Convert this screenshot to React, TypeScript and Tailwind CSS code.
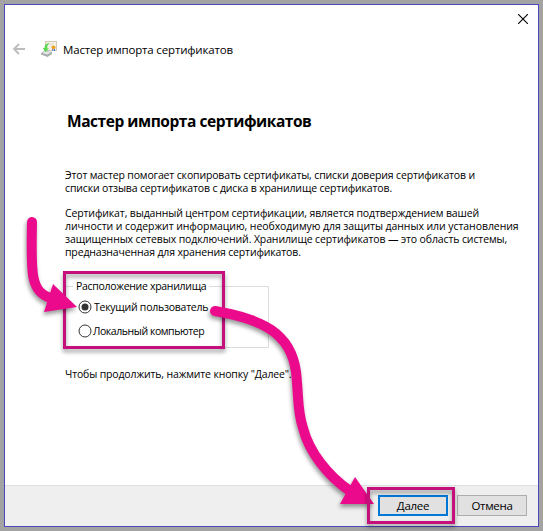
import React from "react";

function CertificateIcon() {
  return (
    <svg className="h-4 w-4 shrink-0" viewBox="0 0 16 16">
      <rect x="4.5" y="0.5" width="11" height="9" fill="#f6f1e8" stroke="#d3c9b8" />
      <path d="M8 3h5M9 5h2" stroke="#e2dccf" strokeWidth="1" />
      <path d="M11.200 7v3h1V7zM13 7v3h1V7z" fill="#3f78d0" />
      <circle cx="12.500" cy="6.300" r="1.900" fill="#eda01c" />
      <path d="M0 12L3.500 9.500l7.500 1.500v2l-4.500 3L0 13.500z" fill="#a9adaf" />
      <path d="M1 11.800L4 10l6 1.200-3.800 2.300z" fill="#e5e8e8" />
      <path d="M7.800 2C4.800 2.800 3.600 4.500 3.400 7H1.800L4.500 11.200 8 7.500H6.200C6.200 5.200 6.700 3.800 8.200 2.800z" fill="#5fd653" />
    </svg>
  );
}

function Radio({ label, checked, className }: { label: string; checked: boolean; className: string }) {
  return (
    <label className={`flex h-[14px] items-center ${className}`}>
      <svg className="h-[14px] w-[14px] shrink-0" viewBox="0 0 14 14">
        <circle cx="7" cy="7" r="6" fill="white" stroke="#333" strokeWidth="1" />
        {checked && <circle cx="7" cy="7" r="3.500" fill="#333" />}
      </svg>
      <span className="whitespace-nowrap">{label}</span>
    </label>
  );
}

function Annotations() {
  return (
    <svg className="pointer-events-none absolute left-0 top-0 h-[531px] w-[543px] drop-shadow-[-1px_3px_2px_rgba(0,0,0,0.4)]" viewBox="0 0 543 531">
      <g fill="none" stroke="#ec0a8c" strokeWidth="10" strokeLinecap="round">
        <path d="M32 222C31 272 30 292 51 298" />
        <path d="M215 311C262 319 291 333 296 372C299 398 297 410 303 428C309 452 328 476 350 491" />
      </g>
      <path d="M53 284L77 307L44 312Z" fill="#ec0a8c" />
      <path d="M355 477L374 504L340 504Z" fill="#ec0a8c" />
    </svg>
  );
}

export default function App() {
  return (
    <div className="relative h-[531px] w-[543px] overflow-hidden bg-[#a3a3a3] pl-1 pt-1 font-['Open_Sans','Noto_Sans',sans-serif] text-black">
      <div className="flex h-[523px] w-[535px] flex-col border border-[#4a48b8] bg-white">
        <div className="flex h-7 justify-end pr-[10px] pt-[9px]">
          <svg className="h-[10px] w-[10px]" viewBox="0 0 10 10" stroke="#000" strokeWidth="1.100">
            <path d="M0 0L10 10M10 0L0 10" />
          </svg>
        </div>
        <header className="flex h-[32px] items-center pl-2">
          <svg className="h-3 w-3" viewBox="0 0 12 12" fill="none" stroke="#bcbcbc" strokeWidth="1.800">
            <path d="M12 6H1M6 1L1 6l5 5" />
          </svg>
          <div className="ml-4"><CertificateIcon /></div>
          <span className="ml-[6px] whitespace-nowrap pt-[2px] text-[11.5px] tracking-[-0.16px]">Мастер импорта сертификатов</span>
        </header>
        <main className="flex h-[420px] flex-col pl-[60px] text-[10.5px] leading-[13px] tracking-[-0.15px]">
          <h1 className="mt-[44px] whitespace-nowrap pl-[2px] text-[15.5px] font-bold leading-6 tracking-[-0.45px]">Мастер импорта сертификатов</h1>
          <p className="mt-[36px] whitespace-nowrap">
            Этот мастер помогает скопировать сертификаты, списки доверия сертификатов и<br />
            списки отзыва сертификатов с диска в хранилище сертификатов.
          </p>
          <p className="mt-3 whitespace-nowrap">
            <span className="tracking-[-0.13px]">Сертификат, выданный центром сертификации, является подтверждением вашей</span><br />
            <span className="tracking-[-0.07px]">личности и содержит информацию, необходимую для защиты данных или установления</span><br />
            <span className="tracking-[-0.12px]">защищенных сетевых подключений. Хранилище сертификатов — это область системы,</span><br />
            предназначенная для хранения сертификатов.
          </p>
          <fieldset className="mt-[21px] h-[68px] w-[204px] border border-[#dcdcdc] pl-[12px]">
            <legend className="-ml-[5px] px-[3px] tracking-[-0.3px]">Расположение хранилища</legend>
            <div className="mt-[7px] flex flex-col gap-[10px]">
              <Radio label="Текущий пользователь" checked className="gap-[2px] tracking-[-0.25px]" />
              <Radio label="Локальный компьютер" checked={false} className="gap-px tracking-[-0.43px]" />
            </div>
          </fieldset>
          <p className="mt-5 whitespace-nowrap">Чтобы продолжить, нажмите кнопку "Далее".</p>
        </main>
        <footer className="flex grow justify-end gap-[9px] border-t border-[#dfdfdf] bg-[#efefef] pr-[11px] pt-[9px] text-[11.5px] tracking-[-0.3px]">
          <button className="h-[21px] w-[70px] border-2 border-[#0078d7] bg-[#e1e1e1]">Далее</button>
          <button className="h-[21px] w-[70px] border border-[#adadad] bg-[#e1e1e1]">Отмена</button>
        </footer>
      </div>
      <div className="absolute left-[63px] top-[271px] h-[78px] w-[162px] border-[3px] border-[#c5107b] drop-shadow-[0_3px_2px_rgba(0,0,0,0.4)]" />
      <Annotations />
      <div className="absolute left-[367px] top-[487px] h-[37px] w-[88px] border-[3px] border-[#c5107b] drop-shadow-[0_3px_2px_rgba(0,0,0,0.4)]" />
    </div>
  );
}
